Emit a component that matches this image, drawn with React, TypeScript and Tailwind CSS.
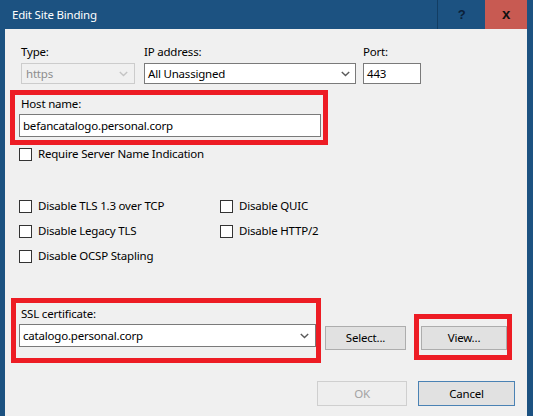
import React from 'react';

// Small down-chevron used by the combo boxes
function Chevron({ disabled = false }: { disabled?: boolean }) {
  return (
    <svg width="9" height="6" viewBox="0 0 9 6" className="shrink-0">
      <path
        d="M0.8 1 L4.5 4.6 L8.2 1"
        fill="none"
        stroke={disabled ? '#c4c4c4' : '#5a5a5a'}
        strokeWidth="1.4"
      />
    </svg>
  );
}

function Check({ label }: { label: string }) {
  return (
    <div className="flex items-center h-[16px] gap-[6px]">
      <span className="w-[13px] h-[13px] border border-[#333333] bg-white shrink-0" />
      <span className="leading-[16px] whitespace-nowrap">{label}</span>
    </div>
  );
}

export default function App() {
  return (
    <div className="w-[533px] h-[416px] bg-[#1c5281] flex flex-col overflow-hidden text-[11.5px] tracking-[-0.2px] text-black font-['Noto_Sans',sans-serif]">
      {/* Title bar */}
      <div className="h-[29px] flex items-stretch shrink-0">
        <div className="flex-1 flex items-center pl-[12px] text-white">Edit Site Binding</div>
        <div className="w-[48px] border-l border-[#123d63] flex items-center justify-center font-bold text-[13px] text-[#0b2038] font-['Liberation_Sans',sans-serif]">
          ?
        </div>
        <div className="w-[42px] bg-[#c85a52] flex items-center justify-center font-bold text-[15px] text-[#111111] font-['Liberation_Sans',sans-serif]">
          x
        </div>
        <div className="w-[6px]" />
      </div>

      {/* Dialog body */}
      <div className="flex-1 ml-[5px] mr-[6px] bg-[#f0f0f0] pt-[15px]">
        {/* Type / IP / Port */}
        <div className="flex ml-[16px]">
          <div className="w-[114px]">
            <div className="leading-[16px] mb-[3px]">Type:</div>
            <div className="h-[21px] border border-[#cccccc] bg-[#f0f0f0] flex items-center justify-between pl-[4px] pr-[6px] text-[#8d8d8d]">
              <span>https</span>
              <Chevron disabled />
            </div>
          </div>
          <div className="w-[212px] ml-[9px]">
            <div className="leading-[16px] mb-[3px]">IP address:</div>
            <div className="h-[21px] border border-[#7a7a7a] bg-white flex items-center justify-between pl-[3px] pr-[5px]">
              <span>All Unassigned</span>
              <Chevron />
            </div>
          </div>
          <div className="w-[58px] ml-[7px]">
            <div className="leading-[16px] mb-[3px]">Port:</div>
            <div className="h-[21px] border border-[#7a7a7a] bg-white flex items-center pl-[3px]">443</div>
          </div>
        </div>

        {/* Host name, highlighted */}
        <div className="mt-[6px] ml-[5px] w-[318px] h-[55px] border-[5px] border-[#ed1c24] pt-[1px]">
          <div className="leading-[16px] pl-[6px]">Host name:</div>
          <div className="mt-[2px] ml-[4px] w-[302px] h-[23px] border border-[#7a7a7a] bg-white flex items-center pl-[3px]">
            befancatalogo.personal.corp
          </div>
        </div>

        <div className="mt-[1px] ml-[14px]">
          <Check label="Require Server Name Indication" />
        </div>

        {/* Protocol options */}
        <div className="mt-[36px] ml-[14px] grid grid-cols-[201px_auto] gap-y-[9px]">
          <Check label="Disable TLS 1.3 over TCP" />
          <Check label="Disable QUIC" />
          <Check label="Disable Legacy TLS" />
          <Check label="Disable HTTP/2" />
          <Check label="Disable OCSP Stapling" />
        </div>

        {/* Certificate */}
        <div className="mt-[34px] flex items-start">
          <div className="ml-[6px] w-[310px] h-[65px] border-[5px] border-[#ed1c24] pt-[3px]">
            <div className="leading-[16px] pl-[5px]">SSL certificate:</div>
            <div className="mt-[2px] ml-[3px] w-[297px] h-[23px] border border-[#7a7a7a] bg-white flex items-center justify-between pl-[3px] pr-[6px]">
              <span>catalogo.personal.corp</span>
              <Chevron />
            </div>
          </div>
          <button className="ml-[4px] mt-[28px] w-[81px] h-[24px] border border-[#adadad] bg-[#e1e1e1]">
            Select...
          </button>
          <div className="ml-[8px] mt-[16px] w-[98px] h-[46px] border-[5px] border-[#ed1c24] pt-[7px] pl-[2px]">
            <button className="w-[86px] h-[24px] border border-[#adadad] bg-[#e1e1e1]">View...</button>
          </div>
        </div>

        {/* Dialog buttons */}
        <div className="mt-[18px] flex justify-end gap-[11px] pr-[12px]">
          <button className="w-[90px] h-[25px] border border-[#cfcfcf] bg-[#eeeeee] text-[#a3a3a3]">OK</button>
          <button className="w-[97px] h-[25px] border border-[#4a82b4] bg-[#e1e1e1]">Cancel</button>
        </div>
      </div>
    </div>
  );
}
